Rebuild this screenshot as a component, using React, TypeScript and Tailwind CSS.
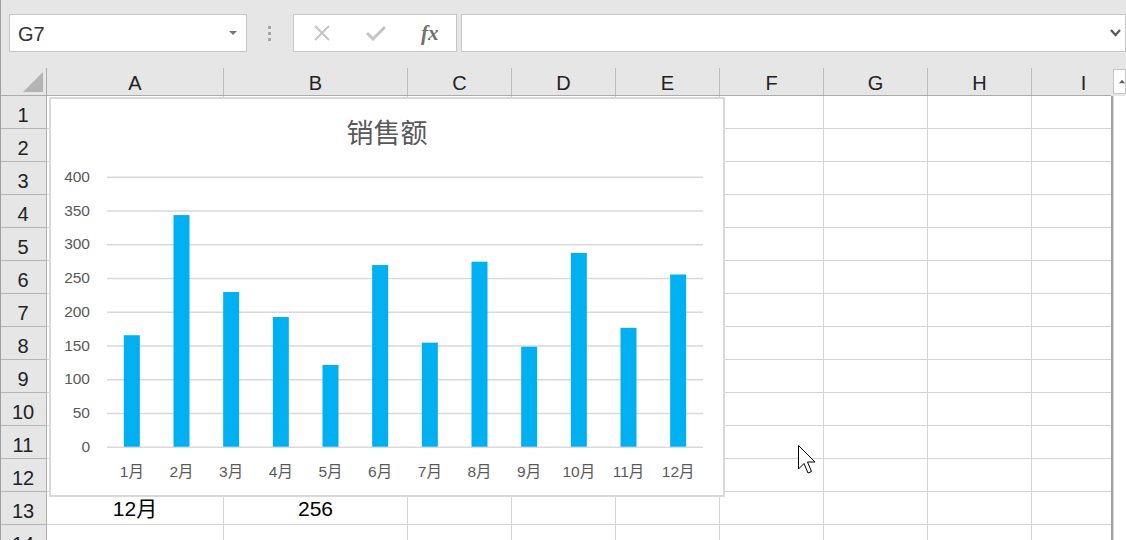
import React from 'react';

const sales = [
  { m: '1月', v: 166 },
  { m: '2月', v: 344 },
  { m: '3月', v: 230 },
  { m: '4月', v: 193 },
  { m: '5月', v: 122 },
  { m: '6月', v: 270 },
  { m: '7月', v: 155 },
  { m: '8月', v: 275 },
  { m: '9月', v: 149 },
  { m: '10月', v: 288 },
  { m: '11月', v: 177 },
  { m: '12月', v: 256 },
];

const cols = [
  { name: 'A', w: 177 },
  { name: 'B', w: 184 },
  { name: 'C', w: 104 },
  { name: 'D', w: 104 },
  { name: 'E', w: 104 },
  { name: 'F', w: 104 },
  { name: 'G', w: 104 },
  { name: 'H', w: 104 },
  { name: 'I', w: 104 },
];

const rows = Array.from({ length: 14 }, (_, i) => i + 1);

// chart geometry (svg coords)
const base = 297.3;
const scale = 0.675;
const plotLeft = 56;
const plotRight = 652;
const slot = (plotRight - plotLeft) / 12;
const yOf = (v: number) => base - v * scale;

function SalesChart() {
  return (
    <div className="absolute left-[48px] top-[97px] w-[676px] h-[400px] border-2 border-[#d9d9d9] bg-white flex flex-col">
      <div className="pt-[17px] h-[51px] text-center text-[27px] leading-[36px] text-[#595959] font-['Liberation_Sans','Noto_Sans_CJK_SC',sans-serif]">
        销售额
      </div>
      <svg width="672" height="345" className="block font-['Liberation_Sans','Noto_Sans_CJK_SC',sans-serif]">
        {[0, 50, 100, 150, 200, 250, 300, 350, 400].map((t) => (
          <g key={t}>
            <line x1={plotLeft} x2={plotRight} y1={yOf(t)} y2={yOf(t)} stroke="#d9d9d9" strokeWidth="1.5" />
            <text x="39" y={yOf(t) + 4.5} textAnchor="end" fontSize="15.5" fill="#595959">
              {t}
            </text>
          </g>
        ))}
        {sales.map((s, i) => {
          const cx = plotLeft + slot * (i + 0.5);
          return (
            <g key={s.m}>
              <rect x={cx - 8} y={yOf(s.v)} width="16" height={s.v * scale - 0.6} fill="#00b0f0" />
              <text x={cx} y="327" textAnchor="middle" fontSize="15.5" fill="#595959">
                {s.m}
              </text>
            </g>
          );
        })}
      </svg>
    </div>
  );
}

function FormulaBar() {
  return (
    <div className="h-[68px] flex items-start pt-[14px] pl-[8px]">
      <div className="w-[239px] h-[38px] border border-[#c6c6c6] bg-white flex items-center justify-between pl-[8px] pr-[9px]">
        <span className="text-[20px] text-[#333333] pt-[1px]">G7</span>
        <svg width="8" height="4" viewBox="0 0 8 4">
          <polygon points="0,0 8,0 4,4" fill="#777777" />
        </svg>
      </div>
      <div className="w-[46px] h-[38px] flex flex-col items-center justify-center gap-[3px]">
        <span className="w-[3px] h-[3px] bg-[#a6a6a6]" />
        <span className="w-[3px] h-[3px] bg-[#a6a6a6]" />
        <span className="w-[3px] h-[3px] bg-[#a6a6a6]" />
      </div>
      <div className="w-[164px] h-[38px] border border-[#c6c6c6] bg-white flex items-center">
        <div className="w-[55px] flex justify-center pl-[1px]">
          <svg width="18" height="16" viewBox="0 0 18 16">
            <path d="M2 1 L16 15 M16 1 L2 15" stroke="#c4c4c4" strokeWidth="2" fill="none" />
          </svg>
        </div>
        <div className="w-[55px] flex justify-center">
          <svg width="20" height="15" viewBox="0 0 20 15">
            <path d="M1 7 L7 13 L19 1" stroke="#c4c4c4" strokeWidth="3" fill="none" />
          </svg>
        </div>
        <div className="w-[52px] flex justify-center">
          <span className="text-[21px] italic font-bold text-[#707070] font-['Liberation_Serif',serif] leading-none">
            fx
          </span>
        </div>
      </div>
      <div className="ml-[4px] w-[668px] h-[38px] border border-[#c6c6c6] bg-white flex items-center justify-end pr-[4px]">
        <svg width="11" height="8" viewBox="0 0 11 8">
          <polyline points="1,1 5.5,6 10,1" stroke="#595959" strokeWidth="2.2" fill="none" />
        </svg>
      </div>
    </div>
  );
}

function Sheet() {
  return (
    <div className="w-[1111px] overflow-hidden">
      <div className="flex h-[28px] border-b border-[#ababab]">
        <div className="w-[47px] shrink-0 border-r border-[#ababab] flex items-end justify-end pr-[3px] pb-[3px]">
          <svg width="20" height="20" viewBox="0 0 20 20">
            <polygon points="20,0 20,20 0,20" fill="#b4b4b4" />
          </svg>
        </div>
        {cols.map((c) => (
          <div
            key={c.name}
            style={{ width: c.w }}
            className="shrink-0 border-r border-[#bdbdbd] flex items-center justify-center pt-[3px] text-[20px] text-[#222222]"
          >
            {c.name}
          </div>
        ))}
      </div>
      {rows.map((r) => (
        <div key={r} className="flex h-[33px]">
          <div className="w-[47px] shrink-0 border-r border-[#ababab] border-b border-b-[#b5b5b5] bg-[#e6e6e6] flex items-center justify-center pt-[5px] text-[20px] text-[#222222]">
            {r}
          </div>
          {cols.map((c, ci) => (
            <div
              key={c.name}
              style={{ width: c.w }}
              className="shrink-0 bg-white border-r border-b border-[#d4d4d4] flex items-center justify-center pt-[2px] text-[21px] text-black"
            >
              {r === 13 && ci === 0 ? '12月' : r === 13 && ci === 1 ? '256' : ''}
            </div>
          ))}
        </div>
      ))}
    </div>
  );
}

function ScrollBar() {
  return (
    <div className="w-[15px] flex flex-col">
      <div className="h-[28px] pt-[1px] pl-[2px]">
        <div className="h-[25px] border border-[#c6c6c6] bg-white flex items-center pl-[5px]">
          <svg width="9" height="5" viewBox="0 0 9 5">
            <polygon points="4.5,0 9,5 0,5" fill="#606060" />
          </svg>
        </div>
      </div>
      <div className="flex-1 border-l-2 border-[#a0a0a0] bg-white flex flex-col">
        <div className="flex-1 border-l border-[#d9d9d9]" />
        <div className="h-[16px] bg-[#dcdcdc]" />
      </div>
    </div>
  );
}

export default function App() {
  return (
    <div className="relative w-[1126px] h-[540px] overflow-hidden bg-[#e6e6e6] border-l border-[#a0a0a0] font-['Liberation_Sans','Noto_Sans_CJK_SC',sans-serif]">
      <FormulaBar />
      <div className="flex -ml-[1px]">
        <Sheet />
        <ScrollBar />
      </div>
      <SalesChart />
      <svg className="absolute left-[797px] top-[445px]" width="20" height="30" viewBox="0 0 20 30">
        <path
          d="M0.5 0.5 L0.5 24 L6 18.5 L10 28 L13.5 26.5 L9.5 17 L17 17 Z"
          fill="white"
          stroke="black"
          strokeWidth="1"
        />
      </svg>
    </div>
  );
}
